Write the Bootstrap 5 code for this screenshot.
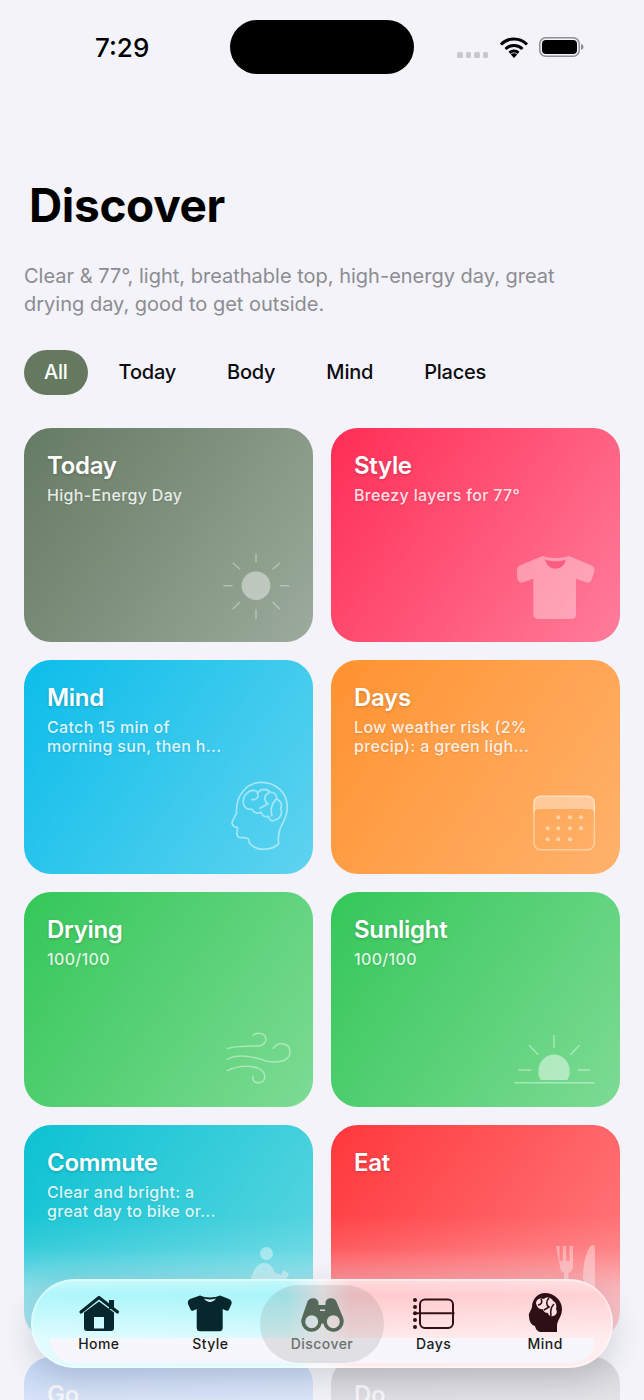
<!DOCTYPE html>
<html lang="en">

<head>
    <meta charset="UTF-8">
    <meta name="viewport" content="width=device-width, initial-scale=1.0">
    <title>Discover</title>
    <link href="https://cdn.jsdelivr.net/npm/bootstrap@5.3.2/dist/css/bootstrap.min.css" rel="stylesheet">
    <style>
        html, body { height: 1400px; overflow: hidden; }
        body { background-color: #f3f3f9; font-family: Inter, "Liberation Sans", sans-serif; color: #000; }

        .phone-page { position: relative; height: 1400px; overflow: hidden; padding: 0 24px; }

        /* status bar */
        .status-row { height: 94px; position: relative; }
        .clock { position: absolute; left: 71px; top: 32px; font-size: 26px; font-weight: 500; line-height: 32px; }
        .island { position: absolute; left: 206px; top: 20px; width: 184px; height: 54px; border-radius: 27px; background: #000; }
        .signal-dots { position: absolute; left: 433px; top: 52px; gap: 3px; }
        .signal-dots span { width: 5.5px; height: 5.5px; border-radius: 1.5px; background: #c9c9cd; }
        .wifi-icon { position: absolute; left: 475px; top: 36px; }
        .battery-icon { position: absolute; left: 515px; top: 36px; }

        .page-title { font-size: 46px; font-weight: 700; line-height: 56px; margin: 83px 0 0 5px; letter-spacing: -.35px; }
        .page-sub { font-size: 20px; line-height: 28px; color: #8c8c92; margin: 29px 0 0; max-width: 580px; }

        .filter-row { margin-top: 32px; gap: 11px; }
        .filter-pill { height: 45px; line-height: 45px; padding: 0 20px; border-radius: 23px; font-size: 20px; font-weight: 500; color: #0c0c0f; letter-spacing: -.22px; }
        .filter-pill.on { background: #64795f; color: #fff; }

        .tile-grid { display: grid; grid-template-columns: 289px 289px; gap: 18px; margin-top: 33px; }
        .tile { position: relative; height: 214.2px; border-radius: 27px; padding: 22px 23px; color: #fff; overflow: hidden; }
        .tile-name { font-size: 24px; font-weight: 600; line-height: 32px; text-shadow: 0 1px 3px rgba(0, 0, 0, .2); letter-spacing: -.3px; }
        .tile-text { font-size: 16px; font-weight: 500; line-height: 19px; color: rgba(255, 255, 255, .86); margin-top: 4px; letter-spacing: .33px; text-shadow: 0 1px 2px rgba(0, 0, 0, .1); }
        .tile-art { position: absolute; right: 0; bottom: 0; }

        .g-today { background: linear-gradient(125deg, #657a63, #9cab9c); }
        .g-style { background: linear-gradient(125deg, #ff2d55, #ff7d9b); }
        .g-mind { background: linear-gradient(125deg, #0cbdea, #5fd3ef); }
        .g-days { background: linear-gradient(125deg, #ff9230, #ffb26c); }
        .g-green { background: linear-gradient(125deg, #34c759, #7ddb94); }
        .g-commute { background: linear-gradient(125deg, #0cc2d2, #62d8e2); }
        .g-eat { background: linear-gradient(125deg, #ff383c, #ff7f82); }
        .g-go { background: linear-gradient(125deg, #2f7fe6, #5fa0ee); }
        .g-do { background: linear-gradient(125deg, #6f6a6a, #8d8787); }

        /* fade of the content under the tab bar */
        .bottom-fade { position: absolute; left: 0; right: 0; top: 1215px; height: 185px; background: linear-gradient(180deg, rgba(243, 243, 249, 0), rgba(243, 243, 249, .12) 18%, rgba(243, 243, 249, .5) 40%, rgba(243, 243, 249, .72) 75%, rgba(243, 243, 249, .85)); }

        .tab-shell { position: absolute; left: 31px; top: 1279px; width: 582px; height: 89px; border-radius: 44px; overflow: hidden; box-shadow: 0 10px 30px rgba(40, 40, 60, .16);
            background: linear-gradient(90deg, #b0f7fc 0, #a9f5fa 44%, #f0eef2 50%, #ffcacd 55%, #ffd2d5 100%); }
        .tab-wash { position: absolute; inset: 0; background: linear-gradient(180deg, rgba(255, 255, 255, .35), rgba(255, 255, 255, 0) 18%, rgba(255, 255, 255, .62) 68%); }
        .tab-strip { position: absolute; left: 19px; right: 19px; top: 59px; bottom: 5px; border-radius: 4px 4px 32px 32px; background: #f7f6fc; }
        .tab-rim { position: absolute; inset: 0; border-radius: 44px; border: 2px solid rgba(255, 255, 255, .4); }
        .tab-active { position: absolute; left: 229px; top: 6px; width: 124px; height: 78px; border-radius: 39px; background: rgba(110, 110, 110, .17); }
        .tab-row { position: relative; height: 100%; padding: 0 12px; }
        .tab-item { width: 112px; font-size: 14px; font-weight: 500; line-height: 16px; letter-spacing: .45px; color: #1c1c20; padding-top: 16px; }
        .tab-item svg { display: block; height: 38px; margin-bottom: 3px; overflow: visible; }
        .tab-item.on { color: #6a716c; }
    </style>
</head>

<body>
    <div class="phone-page">
        <div class="status-row">
            <div class="clock">7:29</div>
            <div class="island"></div>
            <div class="signal-dots d-flex"><span></span><span></span><span></span><span></span></div>
            <svg class="wifi-icon" width="30" height="22" viewBox="0 0 30 22">
                <path d="M2 8.500a18 18 0 0 1 26 0M6.500 13a12 12 0 0 1 17 0M10.500 16.800a6.500 6.500 0 0 1 9 0" fill="none" stroke="#000" stroke-width="3"/>
                <path d="M15 22l-3.200-3.400a4.400 4.400 0 0 1 6.400 0z" fill="#000"/>
            </svg>
            <svg class="battery-icon" width="46" height="22" viewBox="0 0 46 22">
                <rect x=".75" y="1.750" width="39.500" height="18.500" rx="6" fill="none" stroke="#8e8e93" stroke-width="1.500"/>
                <rect x="3" y="4" width="35" height="14" rx="4" fill="#000"/>
                <path d="M42 8c1.600.4 2.500 1.500 2.500 3s-.9 2.600-2.500 3z" fill="#8e8e93"/>
            </svg>
        </div>

        <h1 class="page-title">Discover</h1>
        <p class="page-sub">Clear &amp; 77°, light, breathable top, high-energy day, great drying day, good to get outside.</p>

        <div class="filter-row d-flex">
            <div class="filter-pill on">All</div>
            <div class="filter-pill">Today</div>
            <div class="filter-pill">Body</div>
            <div class="filter-pill">Mind</div>
            <div class="filter-pill">Places</div>
        </div>

        <div class="tile-grid">
            <div class="tile g-today">
                <div class="tile-name">Today</div>
                <div class="tile-text">High-Energy Day</div>
                <svg class="tile-art" width="110" height="100" viewBox="203 542 110 100" fill="none" stroke="#fff" stroke-opacity=".35" stroke-width="1.500">
                    <circle cx="256" cy="585.700" r="14.300" fill="#fff" fill-opacity=".42" stroke="none"/>
                    <path d="M256 553.300v9M256 609.300v9.400M223.300 585.700h9.400M280 585.700h9.300M232.700 562.700l7.300 6.600M280 562.700l-7.300 6.600M232.700 609.300l7.300-7.300M280 609.300l-7.300-7.300"/>
                </svg>
            </div>
            <div class="tile g-style">
                <div class="tile-name">Style</div>
                <div class="tile-text">Breezy layers for 77°</div>
                <svg class="tile-art" width="110" height="100" viewBox="510 542 110 100">
                    <g transform="translate(500 540) scale(.3333)">
                        <path d="M128 48C145 56 190 56 207 48L270 74C281 79 285 86 283 94L276 116C273 127 266 130 258 127L228 116V222C228 232 222 237 212 237H116C106 237 100 232 100 222V116L70 127C62 130 55 127 52 116L51 94C49 86 53 79 64 74Z" fill="#fff" fill-opacity=".36"/>
                        <path d="M135 58C150 66 185 66 198 58C194 78 180 86 166 86C152 86 140 78 135 58Z" fill="#ff5d80"/>
                    </g>
                </svg>
            </div>
            <div class="tile g-mind">
                <div class="tile-name">Mind</div>
                <div class="tile-text">Catch 15 min of<br>morning sun, then h...</div>
                <svg class="tile-art" width="110" height="100" viewBox="203 775 110 100" fill="none" stroke="#fff" stroke-opacity=".5" stroke-linecap="round" stroke-linejoin="round">
                    <g transform="translate(210 770) scale(.3333)" stroke-width="5">
                        <path d="M118 222C118 212 116 206 104 206H92C84 206 80 200 81 192L83 176C72 176 64 166 67 158L80 132C76 80 110 40 155 40C200 40 232 74 232 115C232 145 218 160 210 180C205 195 204 210 206 224C195 236 178 241 160 241C142 241 128 234 118 222Z"/>
                        <path d="M112 72C120 62 135 62 145 70C152 58 172 58 180 70C192 68 202 78 200 90C212 95 218 108 212 118C218 130 212 150 196 152C186 160 176 152 176 142C164 146 156 140 154 130C142 136 130 130 126 120C112 124 98 112 100 98C100 86 104 78 112 72Z"/>
                        <path d="M142 72C148 84 140 94 126 92M176 72C162 78 160 95 174 104L150 118M198 92C188 102 180 120 186 140"/>
                    </g>
                </svg>
            </div>
            <div class="tile g-days">
                <div class="tile-name">Days</div>
                <div class="tile-text">Low weather risk (2%<br>precip): a green ligh...</div>
                <svg class="tile-art" width="110" height="100" viewBox="510 775 110 100">
                    <g transform="translate(515 780) scale(.3333)">
                        <path d="M55 72C55 60 65 50 77 50H218C230 50 240 60 240 72V108C240 96 232 90 220 90H75C63 90 55 96 55 108Z" fill="#fff" fill-opacity=".38"/>
                        <rect x="57" y="52" width="181" height="160" rx="20" fill="none" stroke="#fff" stroke-opacity=".42" stroke-width="4.500"/>
                        <g fill="#fff" fill-opacity=".5">
                            <circle cx="130" cy="115" r="6"/><circle cx="165" cy="115" r="6"/><circle cx="198" cy="115" r="6"/>
                            <circle cx="98" cy="148" r="6"/><circle cx="130" cy="148" r="6"/><circle cx="165" cy="148" r="6"/><circle cx="198" cy="148" r="6"/>
                            <circle cx="98" cy="181" r="6"/><circle cx="130" cy="181" r="6"/><circle cx="165" cy="181" r="6"/>
                        </g>
                    </g>
                </svg>
            </div>
            <div class="tile g-green">
                <div class="tile-name">Drying</div>
                <div class="tile-text">100/100</div>
                <svg class="tile-art" width="110" height="100" viewBox="203 1007 110 100" fill="none" stroke="#fff" stroke-opacity=".42" stroke-linecap="round">
                    <g transform="translate(210 1020) scale(.3333)" stroke-width="4.500">
                        <path d="M52 86C80 75 110 80 140 78C165 78 172 60 165 48C158 38 138 36 130 46"/>
                        <path d="M52 118C85 100 130 110 165 122C195 130 240 128 240 95C240 70 205 62 190 85"/>
                        <path d="M52 152C80 138 115 135 145 145C170 155 170 185 148 188C132 190 125 178 130 168"/>
                    </g>
                </svg>
            </div>
            <div class="tile g-green">
                <div class="tile-name">Sunlight</div>
                <div class="tile-text">100/100</div>
                <svg class="tile-art" width="110" height="100" viewBox="510 1007 110 100">
                    <g transform="translate(505 1020) scale(.3333)">
                        <path d="M107 180A47 50 0 1 1 187 180Z" fill="#fff" fill-opacity=".48"/>
                        <path d="M28 188H268M147 45V83M72 76L100 104M224 76L196 104M40 150H78M218 150H256" fill="none" stroke="#fff" stroke-opacity=".42" stroke-width="4.500"/>
                    </g>
                </svg>
            </div>
            <div class="tile g-commute">
                <div class="tile-name">Commute</div>
                <div class="tile-text">Clear and bright: a<br>great day to bike or...</div>
                <svg class="tile-art" width="110" height="100" viewBox="203 1239 110 100" fill="#fff" fill-opacity=".42">
                    <circle cx="266.500" cy="1253.500" r="6.500"/>
                    <path d="M250 1282C252 1272 257 1263 264 1263C270 1263 273 1267 274 1272L281 1275 284 1270 289 1274 285 1281H250Z"/>
                    <circle cx="258" cy="1298" r="12" fill="none" stroke="#fff" stroke-opacity=".42" stroke-width="3"/>
                    <circle cx="288" cy="1298" r="12" fill="none" stroke="#fff" stroke-opacity=".42" stroke-width="3"/>
                </svg>
            </div>
            <div class="tile g-eat">
                <div class="tile-name">Eat</div>
                <svg class="tile-art" width="110" height="100" viewBox="510 1239 110 100" fill="#fff" fill-opacity=".38">
                    <path d="M556 1246h3.500v15h3.300v-15h3.400v15h3.300v-15h3.500v20c0 4-2.500 6-4.500 7v37h-4.500v-37c-2-1-4-3-4-7z"/>
                    <path d="M592.500 1245c1.500 0 2.500 1 2.500 3v62h-7v-24c-3-1-5-4-5-9 0-14 5-32 9.500-32z"/>
                </svg>
            </div>
            <div class="tile g-go">
                <div class="tile-name">Go</div>
            </div>
            <div class="tile g-do">
                <div class="tile-name">Do</div>
            </div>
        </div>

        <div class="bottom-fade"></div>

        <div class="tab-shell">
            <div class="tab-wash"></div>
            <div class="tab-strip"></div>
            <div class="tab-active"></div>
            <div class="tab-row d-flex justify-content-between">
                <div class="tab-item d-flex flex-column align-items-center">
                    <svg width="46" height="38" viewBox="76 1295 46 38" fill="#06272e">
                        <path d="M81 1312L99 1297.500 117.500 1312" fill="none" stroke="#06272e" stroke-width="3.200" stroke-linecap="round" stroke-linejoin="round"/>
                        <path d="M109 1300h5v9h-5z"/>
                        <path fill-rule="evenodd" d="M84 1312.500L99 1301.500 114 1312.500V1328C114 1330 113 1331 111 1331H87C85 1331 84 1330 84 1328ZM94 1317V1328.500H104V1317Z"/>
                    </svg>
                    Home
                </div>
                <div class="tab-item d-flex flex-column align-items-center">
                    <svg width="46" height="38" viewBox="187 1295 46 38" fill="#06272e">
                        <path d="M200 1295.500C205 1298 215 1298 220 1295.500L229 1299C231.500 1300 232 1302 231.500 1304L229 1309.500C228.500 1310.800 227 1311 226 1310.500L222.700 1309V1328C222.700 1330 221.500 1331.300 219.500 1331.300H200C198 1331.300 196.700 1330 196.700 1328V1309L193.500 1310.500C192.500 1311 191 1310.800 190.500 1309.500L188 1304C187.500 1302 188 1300 190 1299Z"/>
                        <path d="M204 1298.500C207 1303 213 1303 216 1298.500C212 1299.800 208 1299.800 204 1298.500Z" fill="#d5f4f6"/>
                    </svg>
                    Style
                </div>
                <div class="tab-item on d-flex flex-column align-items-center">
                    <svg width="46" height="38" viewBox="299 1295 46 38" fill="#55685a">
                        <path fill-rule="evenodd" d="M307 1303C307.500 1300 310 1298.300 313 1298.300C316 1298.300 318.500 1300 318.500 1303V1305H325.500V1303C325.500 1300 328 1298.300 331 1298.300C334 1298.300 336.500 1300 337 1303L343 1317.500C343.500 1319 343.700 1320 343.700 1321.700A10.300 10.300 0 0 1 323.300 1323.500H321.700A10.300 10.300 0 0 1 301.300 1321.700C301.300 1320 301.500 1319 302 1317.500ZM305.200 1321.700A6.500 6.500 0 1 0 318.200 1321.700A6.500 6.500 0 1 0 305.200 1321.700ZM326.800 1321.700A6.500 6.500 0 1 0 339.800 1321.700A6.500 6.500 0 1 0 326.800 1321.700ZM320 1309.500V1311H325V1309.500Z"/>
                    </svg>
                    Discover
                </div>
                <div class="tab-item d-flex flex-column align-items-center">
                    <svg width="46" height="38" viewBox="411 1295 46 38" fill="none" stroke="#321016" stroke-width="2">
                        <rect x="420" y="1299.500" width="33" height="28.500" rx="5"/>
                        <path d="M414 1313.300H454.500"/>
                        <g fill="#321016" stroke="none"><circle cx="415" cy="1300" r="2"/><circle cx="415" cy="1307" r="2"/><circle cx="415" cy="1313.300" r="2"/><circle cx="415" cy="1320" r="2"/><circle cx="415" cy="1327" r="2"/></g>
                    </svg>
                    Days
                </div>
                <div class="tab-item d-flex flex-column align-items-center">
                    <svg width="46" height="38" viewBox="522 1295 46 38" fill="#2d0f15">
                        <path d="M545 1293C554 1293 562 1300 562 1309C562 1317 557 1320 557 1326V1332H542C538 1332 536 1330 535 1326C531 1325 529 1321 529 1316C528 1314 531 1311 532 1307C532 1299 538 1293 545 1293Z"/>
                        <path d="M536 1303C537 1298 541 1298 544 1299C547 1296 552 1298 553 1301C556 1302 557 1306 556 1309C558 1312 556 1316 553 1316C551 1317 548 1315 548 1313C545 1313 543 1311 543 1309C540 1310 537 1308 536 1303Z" fill="#ffe0e2"/>
                        <path d="M541 1299C543 1302 541 1305 538 1305M549 1298C546 1301 546 1305 549 1307L544 1310M554 1304C551 1307 550 1311 551 1316" fill="none" stroke="#2d0f15" stroke-width="1.600"/>
                    </svg>
                    Mind
                </div>
            </div>
            <div class="tab-rim"></div>
        </div>
    </div>

    <script src="https://cdn.jsdelivr.net/npm/bootstrap@5.3.2/dist/js/bootstrap.bundle.min.js"></script>
</body>

</html>
